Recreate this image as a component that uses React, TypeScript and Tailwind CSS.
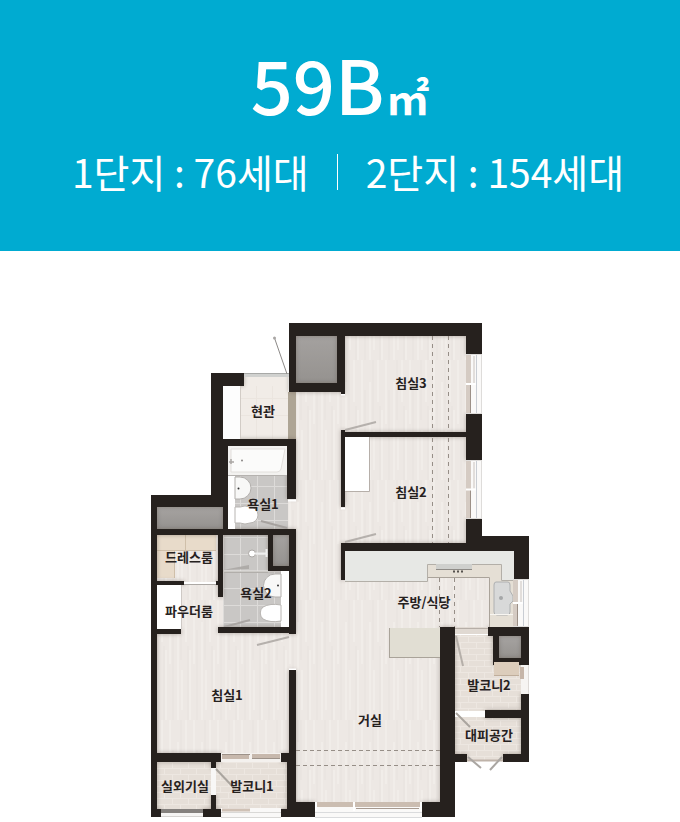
import React from "react";

type Box = [x: number, y: number, w: number, h: number];
type Label = [text: string, x: number, y: number];

const walls: Box[] = [
  // bedrooms 2 and 3
  [289, 323, 193, 13], [289, 323, 7, 69], [337, 323, 8, 69], [289, 383, 56, 9], [341, 390, 4, 4],
  [466, 323, 16, 31], [466, 414, 16, 46], [466, 519, 16, 31],
  [341, 432, 126, 5], [341, 430, 4, 77], [341, 543, 130, 8], [341, 543, 4, 37],
  // kitchen and rear balcony
  [466, 536, 63, 15], [514, 536, 15, 43], [488, 627, 41, 9], [493, 627, 6, 38], [521, 627, 8, 38], [493, 658, 36, 7],
  [440, 627, 15, 190], [521, 694, 8, 68], [485, 710, 44, 8], [440, 754, 27, 8], [503, 754, 26, 8], [422, 802, 33, 15],
  // entrance and bathroom 1
  [211, 373, 33, 13], [211, 373, 12, 134], [211, 439, 85, 7], [223, 439, 5, 94], [287, 439, 9, 60],
  [151, 495, 77, 12], [151, 495, 6, 322], [151, 529, 145, 6],
  // dressing room and bathroom 2
  [218, 530, 5, 67], [157, 581, 27, 4], [216, 581, 7, 4], [151, 629, 30, 5], [218, 627, 78, 6],
  [268, 530, 5, 41], [268, 566, 28, 5], [289, 530, 7, 104],
  // bedroom 1, front balcony, living room
  [289, 670, 7, 147], [151, 753, 70, 9], [281, 753, 15, 9], [287, 753, 9, 64], [211, 753, 5, 15], [211, 795, 5, 22],
  [151, 809, 10, 8], [203, 809, 18, 8], [281, 809, 34, 8], [289, 802, 26, 15],
];

const wood: Box[] = [
  [344, 335, 123, 98], [344, 436, 123, 108], [296, 391, 48, 411], [340, 550, 174, 77], [296, 578, 144, 224],
  [287, 499, 10, 31], [157, 534, 61, 49], [157, 584, 61, 50], [216, 597, 7, 30], [157, 633, 132, 121], [288, 633, 9, 38],
];
const tile: Box[] = [[235, 474, 53, 55], [223, 534, 65, 93]];
const balcony: Box[] = [[455, 627, 66, 84], [455, 717, 66, 38], [467, 754, 36, 6], [157, 762, 55, 48], [216, 762, 72, 47]];
const shafts: Box[] = [[296, 331, 41, 52], [157, 507, 66, 22], [273, 534, 16, 32], [499, 636, 22, 22]];

const labels: Label[] = [
  ["현관", 263, 416], ["침실3", 411, 388], ["침실2", 411, 497], ["욕실1", 263, 509], ["욕실2", 256, 598],
  ["드레스룸", 189, 562], ["파우더룸", 189, 616], ["침실1", 227, 700], ["거실", 370, 725], ["주방/식당", 424, 607],
  ["발코니2", 489, 690], ["대피공간", 489, 740], ["실외기실", 185, 791], ["발코니1", 252, 791],
];

function Boxes({ items, fill }: { items: Box[]; fill?: string }) {
  return (
    <g fill={fill}>
      {items.map(([x, y, w, h], i) => (
        <rect key={i} x={x} y={y} width={w} height={h} />
      ))}
    </g>
  );
}

function SideWindow({ x, y, h }: { x: number; y: number; h: number }) {
  return (
    <g>
      <rect x={x} y={y} width="16" height={h} fill="#faf9f8" />
      <rect x={x} y={y + 1} width="5" height={h - 2} fill="#d5cbc3" />
      <rect x={x + 7} y={y + 2} width="2" height={h / 2 - 3} fill="#e2dedb" />
      <path d={`M${x + 4.5} ${y + h / 2}v${h / 2 - 1}`} stroke="#9b8f86" />
      <path d={`M${x + 10.5} ${y}v${h}`} stroke="#c9cdd3" />
      <path d={`M${x + 15.5} ${y}v${h}M${x} ${y + 0.5}h16M${x} ${y + h - 0.5}h16`} stroke="#dedcda" />
      <path d={`M${x} ${y + h / 2}h10`} stroke="#fff" strokeWidth="2" />
    </g>
  );
}

function FloorPlan() {
  return (
    <svg viewBox="150 322 380 500" className="mx-auto block w-full max-w-[380px]" role="img" aria-label="59B">
      <defs>
        <pattern id="wood" width="24" height="120" patternUnits="userSpaceOnUse">
          <rect width="24" height="120" fill="#ede8e4" />
          <path d="M2 0v64M10 22v98M18 0v42M22 50v70M14 70v40" stroke="#f1ede9" strokeWidth="2" />
          <path d="M5 30v90M13 0v60M20 46v74" stroke="#e8e2de" />
        </pattern>
        <pattern id="tile" width="17" height="17" x="240" y="486" patternUnits="userSpaceOnUse">
          <rect width="17" height="17" fill="#c9c7c5" />
          <path d="M0 .5h17M.5 0v17" stroke="#dddbd9" />
        </pattern>
        <pattern id="balcony" width="16" height="12" patternUnits="userSpaceOnUse">
          <rect width="16" height="12" fill="#e6dfd8" />
          <path d="M0 .5h16M0 6.5h16M4.5 0v6M12.5 6v6" stroke="#ede7e1" />
        </pattern>
        <linearGradient id="shaft" x2="0" y2="1">
          <stop stopColor="#a6a3a1" />
          <stop offset="1" stopColor="#95928f" />
        </linearGradient>
        <filter id="soft" x="-10%" y="-10%" width="120%" height="120%">
          <feGaussianBlur stdDeviation="2" />
        </filter>
        <clipPath id="inside">
          {[...wood, ...tile, ...balcony, ...shafts, [223, 377, 73, 62] as Box, [228, 446, 59, 29] as Box].map(([x, y, w, h], i) => (
            <rect key={i} x={x} y={y} width={w} height={h} />
          ))}
        </clipPath>
      </defs>

      <Boxes items={wood} fill="url(#wood)" />
      <Boxes items={tile} fill="url(#tile)" />
      <Boxes items={balcony} fill="url(#balcony)" />
      <Boxes items={shafts} fill="url(#shaft)" />
      <rect x="240" y="377" width="48" height="62" fill="#f1ece7" />
      <path d="M256.5 386v53M272.5 386v53M240 398.5h48M240 415.5h48" stroke="#ebe5df" />
      <rect x="288" y="392" width="8" height="47" fill="#aea595" />

      {/* wardrobes of the dressing room */}
      <path d="M157 534h59v16h-42v28h-17z" fill="#e8dbca" />
      <path d="M157 550.500h17M174.500 550v28M174 550.500h42M185.500 535v15" stroke="#cfbfa9" />

      <g clipPath="url(#inside)">
        <g filter="url(#soft)" opacity=".45">
          <Boxes items={walls} fill="#5d5148" />
        </g>
      </g>

      {/* entrance */}
      <rect x="223" y="386" width="17" height="53" fill="#fdfdfd" />
      <path d="M240.5 386v53" stroke="#d2ccc6" />
      <rect x="244" y="373" width="45" height="4" fill="#d0d1cf" />
      <path d="M244 373.5h45" stroke="#a8a9a7" />
      <path d="M274.500 338l12.500 36" stroke="#8c8987" />
      <circle cx="274.500" cy="338" r="1.500" fill="#a9a6a4" />

      {/* bathroom 1 */}
      <rect x="228" y="446" width="59" height="29" fill="#f3f2f0" />
      <path d="M231 449h54l-4 20q-1 3-4 3h-46z" fill="#fbfbfa" stroke="#e2dfdc" />
      <circle cx="242" cy="460.500" r="1" fill="#8a8785" />
      <path d="M229 462h5M231 459v5" stroke="#aaa7a4" strokeWidth="1.500" />
      <path d="M228 475.500h59" stroke="#b5b2af" />
      <rect x="228" y="476" width="7" height="53" fill="#fff" />
      <path d="M235 477h5a11 11 0 0 1 0 22h-5z" fill="#f8f8f7" stroke="#b2afac" />
      <circle cx="238.500" cy="488.500" r="1" fill="#333" />
      <path d="M235 507h5q5-2 10 0a8 8 0 0 1 0 16q-5 2-10 0h-5z" fill="#fff" stroke="#b8b5b2" />
      <path d="M261 521l26 7" stroke="#a6a29f" strokeWidth="2" />

      {/* powder room */}
      <path d="M184 584.500h32" stroke="#aca8a4" />
      <path d="M184 582.500h32" stroke="#fff" />
      <rect x="157" y="585" width="24" height="44" fill="#fff" />
      <path d="M181.500 585v44" stroke="#cec9c5" />

      {/* bathroom 2 */}
      <path d="M223 570l26-5v4z" fill="#aeaba8" />
      <path d="M224 572h44" stroke="#b1aeaa" strokeWidth="2" />
      <path d="M224 571h44" stroke="#e7e5e2" />
      <circle cx="252" cy="553.500" r="3.500" fill="#fff" stroke="#aaa6a3" />
      <path d="M255 553.500h11M266.500 549v8" stroke="#eee" strokeWidth="2" />
      <rect x="281" y="571" width="7" height="56" fill="#fff" />
      <path d="M281 574h-6a11 11 0 0 0 0 23h6z" fill="#f8f8f7" stroke="#b2afac" />
      <circle cx="278" cy="585.500" r="1" fill="#333" />
      <path d="M281 605q-11-2-18 2a8 8 0 0 0 0 12q7 4 18 2z" fill="#fff" stroke="#b8b5b2" />
      <path d="M224 627l26-7" stroke="#aaa6a3" strokeWidth="2" />

      {/* bedrooms */}
      <rect x="345" y="437" width="24" height="54" fill="#fff" />
      <path d="M345 491.500h24.500V437" fill="none" stroke="#b6afa9" />
      <path d="M345 430l31-8M345 542l31-8M257 645l32-8" stroke="#b5b0ac" strokeWidth="2" />
      <path d="M341 394.500h4M341 508.500h4M289 669.500h7M288 500.500h8" stroke="#fff" strokeWidth="2" />
      <path d="M432.500 336v96M448.500 336v96M432.500 438v105M448.500 438v105" stroke="#968e87" strokeDasharray="4 4" />

      {/* kitchen */}
      <path d="M427 564h74v17h12v46h-23v-50h-63z" fill="#e5dfd5" />
      <path d="M427 577.500h62.500V627" fill="none" stroke="#aaa39a" />
      <path d="M345 551h169v29h-13v-16h-74v17h-82z" fill="#e7e8e5" />
      <path d="M345 581.500h82.500v-17h74v16h12" fill="none" stroke="#b3afa8" />
      <path d="M436 564h36v5h-36z" fill="#cfd0cd" />
      <path d="M436 569.500h36" stroke="#8f8c87" />
      <path d="M453 571.500h11" stroke="#55514d" strokeDasharray="2 2" strokeWidth="2" />
      <path d="M496 582h12q2 0 2 3v6l3 5v5l-3 3v8q0 3-3 3h-10q-3 0-3-3v-27q0-3 2-3z" fill="#d8d9d9" stroke="#aeb0b1" />
      <circle cx="501" cy="598" r="2" fill="#a5a7a8" />
      <path d="M490 614.500h24" stroke="#f8f6f2" />
      <rect x="390" y="628" width="50" height="29" fill="#e1ded3" />
      <path d="M390 657.500h50M389.500 628v30" stroke="#a9a399" />
      <path d="M439.500 578v49M454.500 578v49" stroke="#968e87" strokeDasharray="4 4" />

      {/* rear balcony */}
      <rect x="455" y="627" width="33" height="7" fill="#e0d9d2" />
      <path d="M455 628.500h33" stroke="#b6aea7" />
      <path d="M455 634.500h33" stroke="#fff" />
      <path d="M456 636l7 30" stroke="#b5afa9" strokeWidth="2" />
      <rect x="521" y="665" width="8" height="29" fill="#f6f4f2" />
      <rect x="520" y="667" width="4" height="12" fill="#c6b5a8" />
      <path d="M528.500 665v29" stroke="#ddd9d6" />
      <path d="M455 712.500h30" stroke="#fff" strokeWidth="2" />
      <path d="M456 713l14 14" stroke="#aaa59f" strokeWidth="2" />
      <path d="M467 760.500h36" stroke="#bfb3a9" strokeWidth="2" />
      <path d="M468 757l13 11M502 757l-12 13" stroke="#aaa6a2" strokeWidth="2" />

      {/* living room */}
      <path d="M296 750.500h144M296 765.500h144" stroke="#968e87" strokeDasharray="4 3" />

      <Boxes items={walls} fill="#26211e" />

      {/* shelf under the balcony shaft */}
      <path d="M494 662h25v14h-25z" fill="#dccdbc" />
      <path d="M494 675.500h25" stroke="#bfae9c" />

      <SideWindow x={466} y={354} h={60} />
      <SideWindow x={466} y={460} h={59} />
      <SideWindow x={513} y={579} h={48} />

      {/* front windows */}
      <rect x="315" y="802" width="107" height="16" fill="#faf9f8" />
      <path d="M315 804.500h107" stroke="#cbbdb1" strokeWidth="5" />
      <path d="M356 808.500h63" stroke="#a79a90" />
      <path d="M315 812.500h107M315 817.500h107" stroke="#dadbdd" />
      <path d="M354 802v9M421 802v9M316 802v9" stroke="#fff" strokeWidth="2" />
      <rect x="221" y="753" width="60" height="9" fill="#f4f1ee" />
      <path d="M222 757h27M252 756h28" stroke="#c7b8ac" strokeWidth="4" />
      <path d="M252 758.500h28M222 754.500h28" stroke="#9d9289" />
      <rect x="221" y="808" width="60" height="10" fill="#f9f8f7" />
      <path d="M222 810h28" stroke="#cfc1b5" strokeWidth="3" />
      <path d="M221 812.500h60M221 817.500h60" stroke="#d9d8d6" />
      <rect x="161" y="809" width="42" height="8" fill="#f5f4f3" />
      <path d="M161 811h42" stroke="#85817e" strokeWidth="4" />
      <path d="M161 816.500h42" stroke="#d5d3d1" />
      <rect x="211" y="768" width="5" height="27" fill="#f8f7f6" />
      <path d="M216 769l18 19" stroke="#aaa59f" strokeWidth="2" />

      <g className="fill-[#26211e] font-['Noto_Sans_CJK_KR',sans-serif] text-[13px] font-bold" textAnchor="middle">
        {labels.map(([text, x, y]) => (
          <text key={text} x={x} y={y}>
            {text}
          </text>
        ))}
      </g>
    </svg>
  );
}

export default function App() {
  return (
    <main className="min-h-screen bg-white font-['Noto_Sans_CJK_KR',sans-serif]">
      <header className="bg-[#00abd1] pt-[43px] pb-[52px] text-center text-white">
        <h1 className="flex items-baseline justify-center gap-0.5 text-[74px] leading-[80px] font-medium">
          <span>59B</span>
          <span className="text-[43px] leading-none font-bold">㎡</span>
        </h1>
        <div className="mt-[21px] flex items-center justify-center pl-4 text-[39px] leading-[55px] font-normal">
          <p>1단지 : 76세대</p>
          <span className="mx-7 h-9 w-px bg-white" />
          <p>2단지 : 154세대</p>
        </div>
      </header>
      <section className="pt-[71px]">
        <FloorPlan />
      </section>
    </main>
  );
}
